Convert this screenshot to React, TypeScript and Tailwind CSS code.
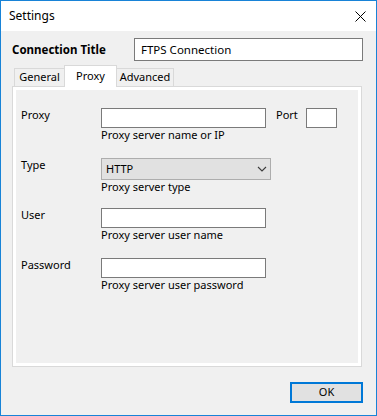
import React from 'react';

function Row({ label, help, children }: { label: string; help: string; children: React.ReactNode }) {
  return (
    <div className="flex h-[50px] items-start">
      <div className="-mt-[1px] w-[80px] leading-[15px]">{label}</div>
      <div className="flex flex-col">
        {children}
        <div className="-mt-[1px] leading-[15px]">{help}</div>
      </div>
    </div>
  );
}

export default function App() {
  return (
    <div className="flex h-[416px] w-[377px] flex-col border border-[#1883d7] bg-[#f0f0f0] font-['Noto_Sans',sans-serif] text-[11px] text-black">
      {/* title bar */}
      <div className="flex h-[30px] items-center justify-between bg-white pl-[8px] pr-[9px] text-[12px]">
        <span>Settings</span>
        <svg width="11" height="11" viewBox="0 0 11 11" className="mr-[1px]">
          <path d="M0.5 0.5 L10.5 10.5 M10.5 0.5 L0.5 10.5" stroke="#000" strokeWidth="1" />
        </svg>
      </div>

      <div className="flex flex-col pl-[11px] pt-[7px]">
        <div className="flex h-[23px] items-center">
          <div className="w-[122px] text-[11.5px] font-bold">Connection Title</div>
          <div className="flex h-[23px] w-[229px] items-center border border-[#7a7a7a] bg-white pl-[6px] text-[11.5px]">FTPS Connection</div>
        </div>

        {/* tabs */}
        <div className="relative z-10 -mb-px mt-[4px] flex items-end pl-[2px]">
          <div className="flex h-[19px] w-[51px] items-center justify-center border border-[#d9d9d9] bg-[#f0f0f0]">General</div>
          <div className="-ml-px flex h-[22px] w-[53px] items-start justify-center border border-b-0 border-[#d9d9d9] bg-white pt-[2px]">Proxy</div>
          <div className="-ml-px flex h-[19px] w-[58px] items-center justify-center border border-[#d9d9d9] bg-[#f0f0f0]">Advanced</div>
        </div>

        {/* tab panel */}
        <div className="h-[281px] w-[350px] border border-[#d9d9d9] bg-white p-[3px]">
          <div className="h-full bg-[#f0f0f0] pl-[5px] pt-[18px]">
            <Row label="Proxy" help="Proxy server name or IP">
              <div className="flex items-start">
                <div className="h-[20px] w-[165px] border border-[#7a7a7a] bg-white" />
                <div className="-mt-[1px] ml-[10px] w-[30px] leading-[15px]">Port</div>
                <div className="h-[20px] w-[31px] border border-[#7a7a7a] bg-white" />
              </div>
            </Row>
            <Row label="Type" help="Proxy server type">
              <div className="flex h-[22px] w-[170px] items-center justify-between border border-[#adadad] bg-[#e1e1e1] pl-[4px] pr-[3px]">
                <span>HTTP</span>
                <svg width="10" height="6" viewBox="0 0 10 6">
                  <path d="M1 1 L5 5 L9 1" fill="none" stroke="#3c3c3c" strokeWidth="1.1" />
                </svg>
              </div>
            </Row>
            <Row label="User" help="Proxy server user name">
              <div className="h-[20px] w-[165px] border border-[#7a7a7a] bg-white" />
            </Row>
            <Row label="Password" help="Proxy server user password">
              <div className="h-[20px] w-[165px] border border-[#7a7a7a] bg-white" />
            </Row>
          </div>
        </div>

        <div className="mt-[15px] flex w-[351px] justify-end">
          <button className="flex h-[21px] w-[73px] items-center justify-center border-2 border-[#0078d7] bg-[#e1e1e1]">OK</button>
        </div>
      </div>
    </div>
  );
}
